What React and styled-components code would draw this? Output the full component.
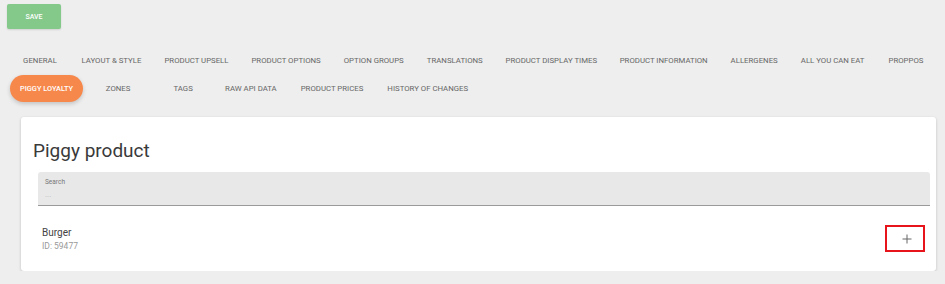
import React from 'react';
import styled, { createGlobalStyle } from 'styled-components';

const GlobalStyle = createGlobalStyle`
  body {
    margin: 0;
    background: #eeeeee;
    font-family: Roboto, "Liberation Sans", Arial, sans-serif;
  }
`;

const topTabs = [
  'GENERAL',
  'LAYOUT & STYLE',
  'PRODUCT UPSELL',
  'PRODUCT OPTIONS',
  'OPTION GROUPS',
  'TRANSLATIONS',
  'PRODUCT DISPLAY TIMES',
  'PRODUCT INFORMATION',
  'ALLERGENES',
  'ALL YOU CAN EAT',
  'PROPPOS',
];

const bottomTabs = [
  { label: 'PIGGY LOYALTY', active: true },
  { label: 'ZONES', min: 70 },
  { label: 'TAGS' },
  { label: 'RAW API DATA' },
  { label: 'PRODUCT PRICES' },
  { label: 'HISTORY OF CHANGES' },
];

function App() {
  return (
    <Page>
      <GlobalStyle />
      <SaveButton>SAVE</SaveButton>
      <Tabs>
        <TabRow>
          {topTabs.map(label => (
            <Tab key={label}>{label}</Tab>
          ))}
        </TabRow>
        <TabRow>
          {bottomTabs.map(tab => (
            <Tab key={tab.label} $active={tab.active} $min={tab.min}>
              {tab.label}
            </Tab>
          ))}
        </TabRow>
      </Tabs>
      <Card>
        <CardTitle>Piggy product</CardTitle>
        <SearchField>
          <SearchLabel>Search</SearchLabel>
          <SearchInput placeholder="..." />
        </SearchField>
        <ProductRow>
          <div>
            <ProductName>Burger</ProductName>
            <ProductId>ID: 59477</ProductId>
          </div>
          <AddButton>
            <svg width="10" height="10" viewBox="0 0 10 10">
              <path d="M5 0.5V9.5M0.5 5H9.5" stroke="#666" strokeWidth="1" />
            </svg>
          </AddButton>
        </ProductRow>
      </Card>
    </Page>
  );
}

const Page = styled.div`
  padding: 4px 9px 0 7px;
`;

const SaveButton = styled.button`
  display: block;
  width: 54px;
  height: 25px;
  border: none;
  border-radius: 2px;
  background: #84c88a;
  color: #ffffff;
  font-family: Roboto, "Liberation Sans", sans-serif;
  font-size: 7px;
  font-weight: 500;
  box-shadow: 0 1px 2px rgba(0, 0, 0, 0.12);
`;

const Tabs = styled.div`
  margin-top: 17px;
`;

const TabRow = styled.div`
  display: flex;
  padding-left: 3px;
  height: 28px;
  align-items: center;
`;

const Tab = styled.div`
  min-width: ${props => (props.$min ? props.$min : 60)}px;
  box-sizing: border-box;
  height: ${props => (props.$active ? 27 : 28)}px;
  padding: 0 ${props => (props.$active ? 10 : 12)}px;
  display: flex;
  align-items: center;
  justify-content: center;
  white-space: nowrap;
  font-size: ${props => (props.$active ? 7.4 : 7.8)}px;
  font-weight: ${props => (props.$active ? 500 : 400)};
  color: ${props => (props.$active ? '#ffffff' : '#666666')};
  background: ${props => (props.$active ? '#f7884b' : 'transparent')};
  border-radius: ${props => (props.$active ? '14px' : '0')};
  box-shadow: ${props =>
    props.$active ? '0 2px 4px rgba(0, 0, 0, 0.18)' : 'none'};
`;

const Card = styled.div`
  margin: 15px 0 0 14px;
  width: 915px;
  height: 154px;
  box-sizing: border-box;
  background: #ffffff;
  border-radius: 3px;
  box-shadow: 0 1px 3px rgba(0, 0, 0, 0.2);
  padding: 22px 6px 0 12px;
`;

const CardTitle = styled.div`
  font-size: 19px;
  color: #3a3a3a;
  line-height: 24px;
  margin-bottom: 9px;
`;

const SearchField = styled.div`
  margin-left: 5px;
  height: 34px;
  box-sizing: border-box;
  background: #e8e8e8;
  border-bottom: 1px solid #9a9a9a;
  border-radius: 3px 3px 0 0;
  padding: 6px 7px 0;
  display: flex;
  flex-direction: column;
`;

const SearchLabel = styled.span`
  font-size: 6.5px;
  color: #777777;
`;

const SearchInput = styled.input`
  border: none;
  outline: none;
  background: transparent;
  padding: 0;
  margin-top: 4px;
  font-family: Roboto, sans-serif;
  font-size: 8px;
  &::placeholder {
    color: #bbbbbb;
  }
`;

const ProductRow = styled.div`
  display: flex;
  justify-content: space-between;
  align-items: center;
  margin-top: 19px;
  padding: 0 5px 0 9px;
`;

const ProductName = styled.div`
  font-size: 10px;
  color: #444444;
`;

const ProductId = styled.div`
  margin-top: 3px;
  font-size: 8.5px;
  color: #999999;
`;

const AddButton = styled.div`
  width: 40px;
  height: 27px;
  box-sizing: border-box;
  border: 2px solid #e8141c;
  padding-left: 4px;
  display: flex;
  align-items: center;
  justify-content: center;
`;

export default App;
